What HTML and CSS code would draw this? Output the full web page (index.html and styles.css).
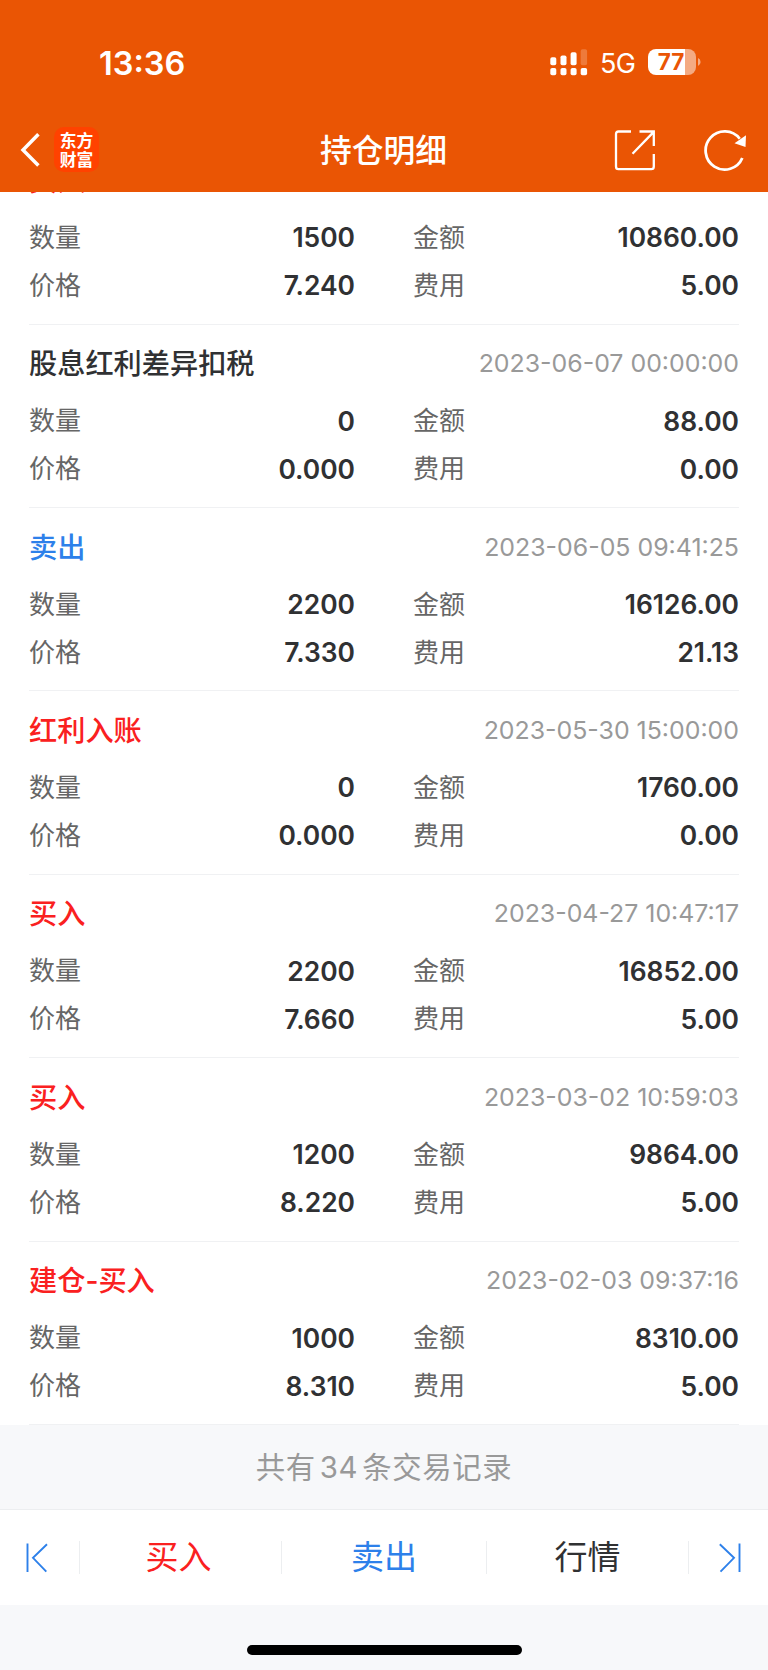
FILE: index.html
```html
<!DOCTYPE html>
<html lang="zh-CN">
<head>
<meta charset="utf-8">
<title>持仓明细</title>
<link rel="stylesheet" href="styles.css">
</head>
<body>
<header class="header">
  <div class="status">
    <span class="clock">13:36</span>
    <div class="status-right">
      <svg class="signal" width="38" height="27" viewBox="0 0 38 27" fill="#fff">
        <rect x="0.3" y="8.2" width="6" height="8" rx="1.8"/><rect x="10.5" y="6.4" width="6" height="9.8" rx="1.8"/><rect x="20.6" y="3.2" width="6" height="13" rx="1.8"/><rect x="30.7" y="0.2" width="6.4" height="16" rx="1.8" opacity=".22"/>
        <rect x="0.3" y="19" width="6" height="7.2" rx="1.8"/><rect x="10.5" y="19" width="6" height="7.2" rx="1.8"/><rect x="20.6" y="19" width="6" height="7.2" rx="1.8"/><rect x="30.7" y="19" width="6.4" height="7.2" rx="1.8"/>
      </svg>
      <span class="network">5G</span>
      <div class="battery"><span class="battery-level">77</span></div>
      <svg class="battery-cap" width="3" height="8" viewBox="0 0 3 8"><path d="M0 0Q2.6 1.2 2.6 4T0 8Z" fill="#fff" opacity=".5"/></svg>
    </div>
  </div>
  <nav class="nav">
    <div class="nav-left">
      <svg width="20" height="34" viewBox="0 0 20 34" fill="none" stroke="#fff" stroke-width="3.5"><path d="M18.4 1.2L3 17L18.4 32.6"/></svg>
      <div class="logo"><span>东方</span><span>财富</span></div>
    </div>
    <h1 class="nav-title">持仓明细</h1>
    <div class="nav-right">
      <svg width="42" height="42" viewBox="0 0 42 42" fill="none" stroke="#fff" stroke-width="2.3"><path d="M17 2.5H4.5Q2 2.5 2 5V37.5Q2 40.2 4.5 40.2H37.2Q39.8 40.2 39.8 37.5V25M25.5 2.5H39.8V17M18.5 24.8L39 3.6"/></svg>
      <svg width="44" height="44" viewBox="0 0 44 44"><path d="M36.75 10.74A19.1 19.1 0 1 0 39.3 30" fill="none" stroke="#fff" stroke-width="2.8"/><path d="M43 7.2L42.5 19L31.5 15.3Z" fill="#fff"/></svg>
    </div>
  </nav>
</header>
<main class="list">
  <section class="record"><div class="record-head"><h2 class="type red">买入</h2></div>
    <div class="fields"><span class="label">数量</span><b class="value">1500</b><span class="label second">金额</span><b class="value">10860.00</b><span class="label">价格</span><b class="value">7.240</b><span class="label second">费用</span><b class="value">5.00</b></div></section>
  <section class="record"><div class="record-head"><h2 class="type">股息红利差异扣税</h2><time class="time">2023-06-07 00:00:00</time></div>
    <div class="fields"><span class="label">数量</span><b class="value">0</b><span class="label second">金额</span><b class="value">88.00</b><span class="label">价格</span><b class="value">0.000</b><span class="label second">费用</span><b class="value">0.00</b></div></section>
  <section class="record"><div class="record-head"><h2 class="type blue">卖出</h2><time class="time">2023-06-05 09:41:25</time></div>
    <div class="fields"><span class="label">数量</span><b class="value">2200</b><span class="label second">金额</span><b class="value">16126.00</b><span class="label">价格</span><b class="value">7.330</b><span class="label second">费用</span><b class="value">21.13</b></div></section>
  <section class="record"><div class="record-head"><h2 class="type red">红利入账</h2><time class="time">2023-05-30 15:00:00</time></div>
    <div class="fields"><span class="label">数量</span><b class="value">0</b><span class="label second">金额</span><b class="value">1760.00</b><span class="label">价格</span><b class="value">0.000</b><span class="label second">费用</span><b class="value">0.00</b></div></section>
  <section class="record"><div class="record-head"><h2 class="type red">买入</h2><time class="time">2023-04-27 10:47:17</time></div>
    <div class="fields"><span class="label">数量</span><b class="value">2200</b><span class="label second">金额</span><b class="value">16852.00</b><span class="label">价格</span><b class="value">7.660</b><span class="label second">费用</span><b class="value">5.00</b></div></section>
  <section class="record"><div class="record-head"><h2 class="type red">买入</h2><time class="time">2023-03-02 10:59:03</time></div>
    <div class="fields"><span class="label">数量</span><b class="value">1200</b><span class="label second">金额</span><b class="value">9864.00</b><span class="label">价格</span><b class="value">8.220</b><span class="label second">费用</span><b class="value">5.00</b></div></section>
  <section class="record"><div class="record-head"><h2 class="type red">建仓-买入</h2><time class="time">2023-02-03 09:37:16</time></div>
    <div class="fields"><span class="label">数量</span><b class="value">1000</b><span class="label second">金额</span><b class="value">8310.00</b><span class="label">价格</span><b class="value">8.310</b><span class="label second">费用</span><b class="value">5.00</b></div></section>
</main>
<p class="summary">共有<span class="count">34</span>条交易记录</p>
<div class="toolbar">
  <div class="tool edge"><svg width="22" height="30" viewBox="0 0 22 30" fill="none" stroke="#2d80ea" stroke-width="1.9"><path d="M1.5 .5V29M21 1.2L7 14.8L20.3 28.6"/></svg></div>
  <div class="tool buy red">买入</div>
  <div class="tool blue">卖出</div>
  <div class="tool">行情</div>
  <div class="tool edge"><svg width="22" height="30" viewBox="0 0 22 30" fill="none" stroke="#2d80ea" stroke-width="1.9"><path d="M20.5 .5V29M.8 1.2L15 14.8L1.5 28.6"/></svg></div>
</div>
<div class="home"><div class="home-bar"></div></div>
</body>
</html>
```
FILE: styles.css
```css
* { box-sizing: border-box; }
body {
  margin: 0;
  width: 768px;
  height: 1670px;
  overflow: hidden;
  display: flex;
  flex-direction: column;
  background: #f7f8fa;
  color: #303133;
  font-family: Inter, "Noto Sans CJK SC", sans-serif;
}
h1, h2, p { margin: 0; }

.header { height: 192px; flex: none; background: #ea5504; color: #fff; }
.status { height: 108px; padding: 16px 67px 0 99px; display: flex; align-items: center; justify-content: space-between; }
.clock { font-size: 32.5px; font-weight: 600; line-height: 40px; padding-top: 3px; }
.status-right { display: flex; align-items: center; }
.signal { margin-right: 12px; }
.network { font-size: 27px; line-height: 30px; width: 48px; letter-spacing: -.7px; padding-top: 4px; }
.battery {
  width: 48px; height: 26px; border-radius: 8px; overflow: hidden;
  background: linear-gradient(90deg, #fff 37px, #f4aa82 37px);
  display: flex; align-items: center; justify-content: center;
}
.battery-level { color: #ea5504; font-size: 22.5px; font-weight: 700; line-height: 26px; padding-right: 2px; }
.battery-cap { margin-left: 2px; }

.nav { height: 84px; padding: 0 21px 1px 20px; display: grid; grid-template-columns: 1fr auto 1fr; align-items: center; }
.nav-left { display: flex; align-items: center; gap: 14px; }
.logo {
  width: 45px; height: 45px; border-radius: 10px; background: #ff4200;
  display: flex; flex-direction: column; align-items: center; justify-content: center;
  font-family: "Noto Sans CJK SC", sans-serif;
  font-size: 16.8px; line-height: 19px; font-weight: 700;
}
.nav-title { font-size: 31.8px; font-weight: 500; line-height: 40px; padding-top: 3px; }
.nav-right { display: flex; justify-content: flex-end; align-items: center; gap: 47px; }

.list {
  flex: none; height: 1233px; padding: 0 29px; overflow: hidden; background: #fff;
  display: flex; flex-direction: column; justify-content: flex-end;
}
.record { height: 183.4px; flex: none; padding-top: 17px; border-bottom: 1px solid #f0f1f3; }
.record-head { display: flex; justify-content: space-between; align-items: center; height: 44px; margin-bottom: 11px; }
.type { font-size: 28.2px; font-weight: 500; line-height: 44px; padding-top: 1px; }
.time { font-size: 24.9px; color: #999; line-height: 43px; }
.fields { display: grid; grid-template-columns: 100px 226px 159px 225px; grid-auto-rows: 48px; align-items: center; }
.label { font-size: 26px; color: #666; line-height: 48px; padding-top: 1px; }
.second { padding-left: 58px; }
.value { font-size: 26.4px; font-weight: 600; line-height: 48px; text-align: right; }
.red { color: #fa2020; }
.blue { color: #2d80ea; }

.summary { flex: none; height: 85px; border-bottom: 1px solid #eceef0; text-align: center; font-size: 29.4px; letter-spacing: .6px; line-height: 86px; color: #999; }
.count { margin: 0 4px; }

.toolbar { flex: none; height: 95px; display: grid; grid-template-columns: 80px 202px 205px 202px 79px; align-items: center; background: #fff; }
.tool { height: 33px; display: flex; align-items: center; justify-content: center; font-size: 33px; line-height: 33px; border-right: 1px solid #eceef0; }
.tool:last-child { border-right: 0; }
.buy { padding-right: 4px; }
.edge { padding-right: 5px; }
.edge:last-child { padding: 0 0 0 2px; }

.home { flex: 1; display: flex; justify-content: center; align-items: flex-start; padding-top: 40px; }
.home-bar { width: 275px; height: 10px; border-radius: 5px; background: #000; }
```
